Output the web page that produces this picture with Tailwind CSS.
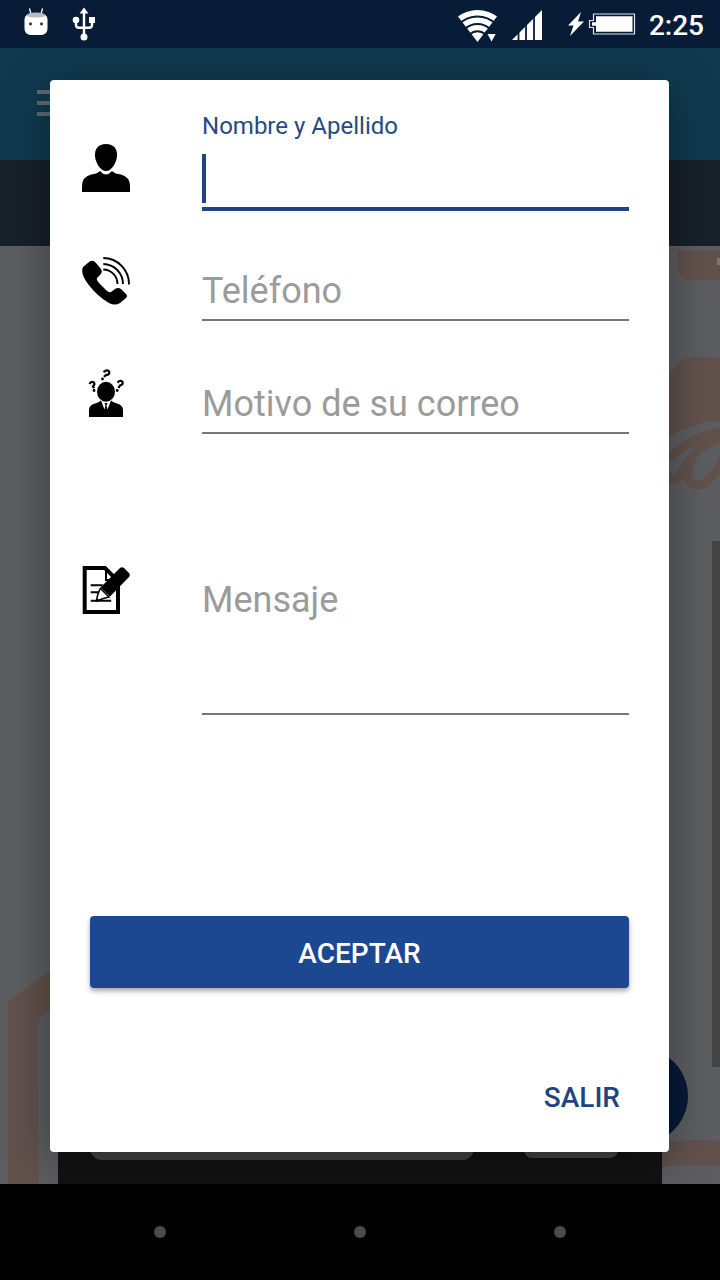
<!DOCTYPE html>
<html lang="es">
<head>
  <meta charset="UTF-8" />
  <meta name="viewport" content="width=device-width, initial-scale=1.0" />
  <title>Contacto</title>
  <script src="https://cdn.jsdelivr.net/npm/@tailwindcss/browser@4"></script>
</head>
<body class="relative w-[720px] h-[1280px] overflow-hidden bg-black font-['Roboto',sans-serif]">

  <!-- App behind the dialog -->
  <div class="flex flex-col h-[1184px]">
    <!-- Status bar -->
    <div class="relative z-20 h-12 bg-[#081c38] shrink-0 flex items-center justify-between pl-6 pr-4 text-white">
      <div class="flex items-center gap-[24px]">
        <svg class="w-6 h-9" viewBox="0 0 24 36">
          <path d="M5.500 2.500L7 8M18.500 2.500L17 8" stroke="#fff" stroke-width="1.300" />
          <path d="M0.500 13Q0.500 7 12 7t11.500 6v9q0 7-6.500 7H7q-6.500 0-6.500-7z" fill="#fff" />
          <path d="M2 9.500Q4 6.500 12 6.500t10 3q-3 2-10 2t-10-2z" fill="#b8bcc2" />
          <circle cx="6.500" cy="18" r="1.400" fill="#222" /><circle cx="17.500" cy="18" r="1.400" fill="#222" />
        </svg>
        <svg class="w-6 h-9" viewBox="0 0 24 36" fill="none" stroke="#fff">
          <path d="M12 6v26M4 15v4q0 2.800 3 2.800h10q3 0 3-2.800v-5" stroke-width="2.400" />
          <path d="M12 1.500l4.500 6h-9zM17 11h6v6h-6z" fill="#fff" stroke="none" />
          <circle cx="4" cy="14" r="3.300" fill="#fff" stroke="none" /><circle cx="12" cy="31" r="3.500" fill="#fff" stroke="none" />
        </svg>
      </div>
      <div class="flex items-center">
        <svg class="w-[180px] h-9 mr-[10px] overflow-visible" viewBox="0 0 180 36">
          <!-- wifi -->
          <path d="M-1 10.600A32 32 0 0 1 38 10.600L18.500 36z" fill="#fff" />
          <path d="M0.300 18A25.700 25.700 0 0 1 36.700 18M5.800 23.300A18 18 0 0 1 31.200 23.300M10.900 28.400A10.700 10.700 0 0 1 26.100 28.400" fill="none" stroke="#081c38" stroke-width="2" />
          <path d="M26 25.500h13v6l-4 6h-8l-3-6z" fill="#081c38" />
          <path d="M28.500 28h8.200l-4.100 7.500z" fill="#fff" />
          <!-- signal -->
          <path d="M53 34L83 4v30z" fill="#fff" />
          <path d="M59.500 20v15M67 14v21M75 8v27" stroke="#081c38" stroke-width="1.800" />
          <!-- battery -->
          <path d="M122 6l-13 13.500h5.500L111 30l14-14.500h-6z" fill="#fff" />
          <path d="M130.500 14.500h4v-6.500h41v20h-41v-6.500h-4z" fill="none" stroke="#dfe4ea" stroke-width="1.200" />
          <path d="M133 16.300h4v-6.100h36.500v15.600h-36.500v-6.100h-4z" fill="#fff" />
        </svg>
        <span class="text-[28px] font-medium leading-none pt-[3px]">2:25</span>
      </div>
    </div>
    <!-- Toolbar -->
    <div class="h-28 bg-[#10394f] shrink-0 pl-[37px] pt-[42px] flex flex-col gap-[7px]">
      <div class="w-8 h-1 bg-[#5f6a73]"></div>
      <div class="w-8 h-1 bg-[#5f6a73]"></div>
      <div class="w-8 h-1 bg-[#5f6a73]"></div>
    </div>
    <div class="h-[86px] bg-[#172128] shrink-0"></div>
    <!-- Content with watermark -->
    <div class="relative h-[938px] bg-[#5d5e62] shrink-0 flex flex-col justify-end">
      <svg class="absolute inset-0 w-[720px] h-[938px]" viewBox="0 246 720 938">
        <g fill="#61524c">
          <path d="M677 250h43v30h-28q-15 0-15-16z" />
          <path d="M669 379q6-22 27-22h24v64q-25 0-51 17z" />
          <path d="M8 1001L50 971v39q-13 6-13 22l2 152H8z" />
          <path d="M662 1143q30-5 58-2v25q-30-3-58 1z" />
        </g>
        <path d="M720 432q-31 6-51 27M667 475q5 12 16-4l10-15M722 438q-25 6-32 24-8 26 12 22 12-4 22-28" fill="none" stroke="#61524c" stroke-width="9" />
        <path d="M717 258h3v7h-3z" fill="#7b7776" />
        <path d="M712 541h8v526h-8z" fill="#454546" />
        <circle cx="640" cy="1096" r="48" fill="#071a38" />
      </svg>
      <div class="relative mx-[58px] h-10 bg-[#131313] flex justify-between pl-8 pr-[44px]">
        <div class="w-[384px] h-4 rounded-b-xl bg-[#454545]"></div>
        <div class="w-[94px] h-[14px] rounded-b-lg bg-[#454545]"></div>
      </div>
    </div>
  </div>

  <!-- Navigation bar -->
  <div class="relative z-20 h-24 bg-black flex items-center justify-center gap-[188px] pb-px">
    <div class="size-3 rounded-full bg-[#4b4b4b]"></div>
    <div class="size-3 rounded-full bg-[#4b4b4b]"></div>
    <div class="size-3 rounded-full bg-[#4b4b4b]"></div>
  </div>

  <!-- Contact dialog -->
  <form class="absolute z-10 left-[50px] top-20 w-[619px] h-[1072px] bg-white rounded shadow-[0_10px_48px_rgba(0,0,0,0.38)] pl-8 pr-10 flex flex-col">
    <div class="flex gap-[72px] h-[131px]">
      <svg class="size-12 mt-16 shrink-0" viewBox="0 0 48 48">
        <path d="M24 0C16 0 12.500 5 13 12c.5 7 5.500 15 11 15s10.500-8 11-15C35.500 5 32 0 24 0z" />
        <path d="M0 48v-6q0-9 9-11.500 6-.5 9-3.500 6 7 12 0 3 3 9 3.500 9 2.500 9 11.500v6z" />
      </svg>
      <div class="flex-1 flex flex-col border-b-4 border-[#1f4684]">
        <label class="text-[24px] leading-7 tracking-[0.01px] text-[#264b80] mt-8">Nombre y Apellido</label>
        <div class="w-1 h-[49px] mt-[14px] bg-[#1f4380]"></div>
      </div>
    </div>
    <div class="flex gap-[72px] h-[110px]">
      <svg class="size-12 mt-[46px] shrink-0" viewBox="0 0 48 48">
        <path d="M1 10l6-5q4-3 7 1l5 6q2 3-1 6l-3 3q-1 2 2 5l7 7q3 3 5 2l4-3q3-2 6 0l5 5q2 2 0 4l-6 5q-5 3-11 0Q15 39 6 27-2 16 1 10z" />
        <path d="M21.300 1A26 26 0 0 1 47 27.500M21.300 7A20 20 0 0 1 41 27M21.300 12.500A14.500 14.500 0 0 1 35.500 27" fill="none" stroke="#000" stroke-width="1.900" />
      </svg>
      <div class="flex-1 flex flex-col justify-end border-b-2 border-[#777]">
        <span class="text-[36px] leading-[42px] text-[#9b9b9b] pb-[7px]">Teléfono</span>
      </div>
    </div>
    <div class="flex gap-[72px] h-[113px]">
      <svg class="size-12 mt-[48px] shrink-0 overflow-visible" viewBox="0 0 48 48">
        <ellipse cx="24" cy="22.800" rx="9" ry="10" />
        <path d="M7 48v-7q0-5 6-6.500 4-1 6-3l3.500 9 1-4-1-2.500h3l-1 2.500 1 4 3.500-9q2 2 6 3 6 1.500 6 6.500v7z" />
        <path d="M21.500 3.200q4-3.400 5.600-.6 1 3-3.100 3.400l-2 1.800M7.500 15q1.500-3 4-1.800 2 1.800-.5 4l1 2M35.500 13.500q3.500-2.800 5-.5 1 2.500-2.500 3.500l-1.500 2.500" fill="none" stroke="#000" stroke-width="2.300" />
        <circle cx="20.500" cy="10" r="1.400" /><circle cx="12" cy="21.500" r="1.400" /><circle cx="35.200" cy="21.500" r="1.400" />
      </svg>
      <div class="flex-1 flex flex-col justify-end border-b-2 border-[#777]">
        <span class="text-[36px] leading-[42px] text-[#9b9b9b] pb-[7px]">Motivo de su correo</span>
      </div>
    </div>
    <div class="flex gap-[72px] h-[281px]">
      <svg class="size-12 mt-[132px] shrink-0" viewBox="0 0 48 48">
        <path d="M2.700 2h20.300l13 13v31H2.700z" fill="#fff" stroke="#000" stroke-width="4" />
        <path d="M24 4v10h10" fill="none" stroke="#000" stroke-width="2" />
        <path d="M8.700 19.300h12M8.700 26.300h8M8.700 34.800h20.500" stroke="#000" stroke-width="1.900" />
        <path d="M18.500 21.500L38 2q2-1.500 4 0l5 5q1.500 2 0 4L28 30.500z" />
        <path d="M18.500 22.500l8.500 8.500q-5 1-12.500 4 1-8 4-12.500z" fill="#fff" stroke="#000" stroke-width="1.500" />
        <path d="M14 35.500l1-3.500 2.500 2.500z" />
      </svg>
      <div class="flex-1 flex flex-col border-b-2 border-[#777]">
        <span class="text-[36px] leading-[42px] text-[#9b9b9b] mt-[145px]">Mensaje</span>
      </div>
    </div>
    <button type="button" class="mt-[201px] ml-2 h-[72px] shrink-0 rounded bg-[#1b4891] text-white text-[28px] font-medium pt-[3px] shadow-[0_3px_5px_rgba(0,0,0,0.35)]">ACEPTAR</button>
    <button type="button" class="mt-[94px] mr-[9px] self-end text-[28px] leading-8 font-medium text-[#1f4580]">SALIR</button>
  </form>

</body>
</html>
